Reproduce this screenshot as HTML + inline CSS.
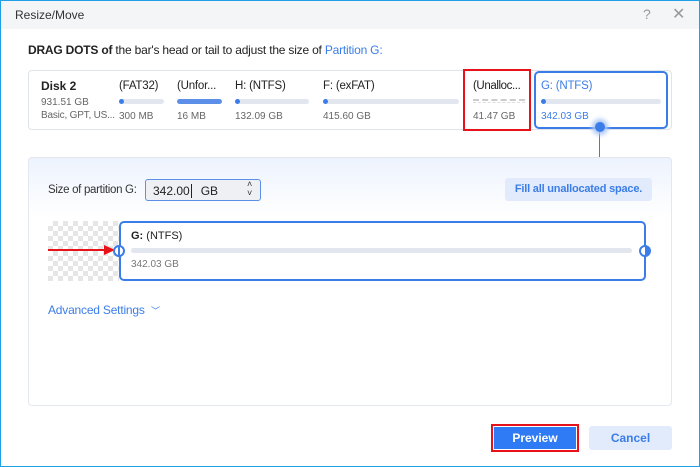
<!DOCTYPE html>
<html><head><style>
*{margin:0;padding:0;box-sizing:border-box}
body{width:700px;height:467px;overflow:hidden;background:#fff;font-family:"Liberation Sans",sans-serif;position:relative}
.a{position:absolute;white-space:nowrap}
.win{left:0;top:0;width:700px;height:467px;border:1px solid #1ea0e6}
.t{font-size:12px;color:#333}
.bar{height:5px;border-radius:3px;background:#e1e6ef}
.dot{width:5px;height:5px;border-radius:3px;background:#3b7de8}
.h{font-size:12px;font-weight:bold;color:#222}
.p{font-size:11.5px;color:#222;letter-spacing:-0.2px}
.s{font-size:10px;color:#666}
</style></head><body>
<div class="a win"></div>
<div class="a" style="left:1px;top:1px;width:698px;height:28px;background:#f4f5f7"></div>
<div class="a t" style="left:15px;top:8px;color:#333">Resize/Move</div>
<div class="a" style="left:643px;top:6px;font-size:14px;color:#999">?</div>
<div class="a" style="left:672px;top:4px;font-size:16px;color:#999">✕</div>
<div class="a t" style="left:28px;top:43px;color:#222;letter-spacing:-0.2px"><b>DRAG DOTS of</b> the bar's head or tail to adjust the size of <span style="color:#3b7de8">Partition G:</span></div>
<div class="a" style="left:28px;top:70px;width:644px;height:60px;border:1px solid #dfe3ea;border-radius:4px"></div>
<div class="a h" style="left:41px;top:79px">Disk 2</div>
<div class="a s" style="left:41px;top:97px">931.51 GB</div>
<div class="a s" style="left:41px;top:110px;letter-spacing:-0.2px">Basic, GPT, US...</div>

<div class="a p" style="left:119px;top:80px">(FAT32)</div>
<div class="a bar" style="left:119px;top:99px;width:45px"></div><div class="a dot" style="left:119px;top:99px"></div>
<div class="a s" style="left:119px;top:111px">300 MB</div>
<div class="a p" style="left:177px;top:80px">(Unfor...</div>
<div class="a bar" style="left:177px;top:99px;width:45px;background:#5b8fe8"></div>
<div class="a s" style="left:177px;top:111px">16 MB</div>
<div class="a p" style="left:235px;top:80px">H: (NTFS)</div>
<div class="a bar" style="left:235px;top:99px;width:74px"></div><div class="a dot" style="left:235px;top:99px"></div>
<div class="a s" style="left:235px;top:111px">132.09 GB</div>
<div class="a p" style="left:323px;top:80px">F: (exFAT)</div>
<div class="a bar" style="left:323px;top:99px;width:136px"></div><div class="a dot" style="left:323px;top:99px"></div>
<div class="a s" style="left:323px;top:111px">415.60 GB</div>
<div class="a" style="left:463px;top:69px;width:68px;height:62px;border:2px solid #e8121a"></div>
<div class="a p" style="left:473px;top:80px;letter-spacing:-0.4px">(Unalloc...</div>
<div class="a" style="left:473px;top:99px;width:52px;height:4px;border-top:2px dashed #ccc;border-bottom:1px dashed #ddd"></div>
<div class="a s" style="left:473px;top:111px">41.47 GB</div>
<div class="a" style="left:534px;top:71px;width:134px;height:58px;border:2px solid #3b7de8;border-radius:5px;background:#fff"></div>
<div class="a p" style="left:541px;top:80px;color:#3b7de8">G: (NTFS)</div>
<div class="a bar" style="left:541px;top:99px;width:120px"></div><div class="a dot" style="left:541px;top:99px"></div>
<div class="a s" style="left:541px;top:111px;color:#3b7de8">342.03 GB</div>
<div class="a" style="left:599px;top:127px;width:1px;height:31px;background:#3b7de8"></div>
<div class="a" style="left:595px;top:122px;width:10px;height:10px;border-radius:5px;background:#3b7de8;box-shadow:0 0 5px 3px #a9c6f5"></div>

<div class="a" style="left:28px;top:157px;width:644px;height:249px;border:1px solid #e3e8f0;border-radius:4px;background:linear-gradient(#edf3fd,#fff 60px)"></div>
<div class="a t" style="left:48px;top:184px;font-size:11.5px;letter-spacing:-0.3px">Size of partition G:</div>
<div class="a" style="left:145px;top:179px;width:116px;height:22px;border:1px solid #5b8fe8;border-radius:3px;background:#eef0f4"></div>
<div class="a t" style="left:153px;top:184px;color:#222">342.00<span style="border-left:1px solid #222;margin:0 9px 0 1px"></span>GB</div>
<div class="a" style="left:247px;top:180px;font-size:9px;line-height:9px;color:#333">˄<br>˅</div>
<div class="a" style="left:505px;top:178px;width:147px;height:23px;border-radius:3px;background:#e2ebfb;color:#3b7de8;font-size:11px;font-weight:bold;text-align:center;line-height:23px;letter-spacing:-0.2px">Fill all unallocated space.</div>

<div class="a" style="left:48px;top:221px;width:71px;height:60px;background-color:#fff;background-image:linear-gradient(45deg,#e6e6e6 25%,transparent 25%,transparent 75%,#e6e6e6 75%),linear-gradient(45deg,#e6e6e6 25%,transparent 25%,transparent 75%,#e6e6e6 75%);background-size:10px 10px;background-position:0 0,5px 5px"></div>
<div class="a" style="left:119px;top:221px;width:527px;height:60px;border:2px solid #3b7de8;border-radius:5px;background:#fff"></div>
<div class="a" style="left:131px;top:230px;font-size:11px;color:#222"><b>G:</b> (NTFS)</div>
<div class="a bar" style="left:131px;top:248px;width:501px"></div>
<div class="a s" style="left:131px;top:259px;color:#777">342.03 GB</div>
<div class="a" style="left:48px;top:249px;width:57px;height:2px;background:#e8121a"></div>
<div class="a" style="left:104px;top:245px;width:0;height:0;border-top:5px solid transparent;border-bottom:5px solid transparent;border-left:11px solid #e8121a"></div>
<div class="a" style="left:113px;top:245px;width:12px;height:12px;border:2px solid #3b7de8;border-radius:6px;background:#fff"></div>
<div class="a" style="left:118px;top:245px;width:2px;height:12px;background:#3b7de8"></div>
<div class="a" style="left:639px;top:245px;width:12px;height:12px;border:2px solid #3b7de8;border-radius:6px;background:linear-gradient(90deg,#fff 50%,#3b7de8 50%)"></div>
<div class="a" style="left:48px;top:303px;font-size:12px;color:#3b7de8;letter-spacing:-0.2px">Advanced Settings &nbsp;<span style="font-size:9px">﹀</span></div>

<div class="a" style="left:491px;top:424px;width:88px;height:28px;border:2px solid #e8121a;background:#2f7bf5;color:#fff;font-size:12px;font-weight:bold;text-align:center"><span style="display:block;border:1px solid #fff;height:24px;line-height:22px">Preview</span></div>
<div class="a" style="left:589px;top:426px;width:83px;height:24px;border-radius:3px;background:#e2ebfb;color:#3b7de8;font-size:12px;font-weight:bold;text-align:center;line-height:24px">Cancel</div>
</body></html>
